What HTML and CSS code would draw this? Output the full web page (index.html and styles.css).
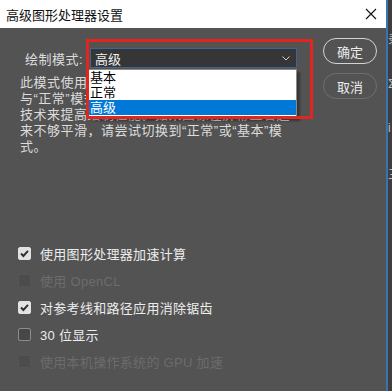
FILE: index.html
```html
<!DOCTYPE html>
<html>
<head>
	<title>高级图形处理器设置</title>
	<link rel="stylesheet" href="styles.css">
</head>
<body>
	<div class="window">
		<div class="dialog">
			<div class="titlebar">
				<span class="title">高级图形处理器设置</span>
				<svg class="close" width="12" height="12" viewBox="0 0 12 12"><path d="M1 1 L11 11 M11 1 L1 11" stroke="#111" stroke-width="1.1" fill="none"/></svg>
			</div>
			<div class="content">
				<div class="main">
					<div class="mode-row">
						<span class="mode-label">绘制模式:</span>
						<div class="mode-field">
							<div class="select">
								<span>高级</span>
								<svg class="chevron" width="8" height="5" viewBox="0 0 8 5"><path d="M0.5 0.5 L4 4 L7.5 0.5" stroke="#cfcfcf" stroke-width="1" fill="none"/></svg>
							</div>
							<ul class="options">
								<li>基本</li>
								<li>正常</li>
								<li class="active">高级</li>
							</ul>
							<div class="red-box"></div>
						</div>
					</div>
					<p class="desc">此模式使用相同数量的 GPU 显存，并<br>与“正常”模式相同，但会启用更高级的绘制<br>技术来提高绘制性能。如果图像在屏幕上看起<br>来不够平滑，请尝试切换到“正常”或“基本”模<br>式。</p>
					<ul class="checks">
						<li><span class="box checked"><svg width="13" height="13" viewBox="0 0 13 13"><path d="M3 6.5 L5.4 9 L10 3.8" stroke="#2e2e2e" stroke-width="1.9" fill="none"/></svg></span>使用图形处理器加速计算</li>
						<li class="disabled"><span class="box"></span>使用 OpenCL</li>
						<li><span class="box checked"><svg width="13" height="13" viewBox="0 0 13 13"><path d="M3 6.5 L5.4 9 L10 3.8" stroke="#2e2e2e" stroke-width="1.9" fill="none"/></svg></span>对参考线和路径应用消除锯齿</li>
						<li><span class="box"></span>30 位显示</li>
						<li class="disabled"><span class="box"></span>使用本机操作系统的 GPU 加速</li>
					</ul>
				</div>
				<div class="buttons">
					<button class="btn primary">确定</button>
					<button class="btn">取消</button>
				</div>
			</div>
		</div>
		<div class="side">
			<span>录</span>
			<span>Σ</span>
			<span>i</span>
			<span>三</span>
		</div>
	</div>
</body>
</html>
```

FILE: styles.css
```css
body {
	margin: 0;
	overflow: hidden;
	background-color: #3d3d3d;
	font-family: "Liberation Sans", "Noto Sans CJK SC", sans-serif;
	font-size: 13px;
}
.window {
	display: flex;
	height: 391px;
}
.dialog {
	width: 386px;
	flex: none;
	background-color: #535353;
	display: flex;
	flex-direction: column;
}
.titlebar {
	height: 28px;
	background-color: white;
	display: flex;
	align-items: center;
	padding: 0 9px 0 6px;
}
.title {
	color: #111;
	flex: 1;
}
.content {
	flex: 1;
	display: flex;
}
.main {
	flex: 1;
	padding-left: 18px;
}
.mode-row {
	display: flex;
	align-items: center;
	margin-top: 20px;
	height: 20px;
}
.mode-label {
	color: #dcdcdc;
	margin-left: 7px;
	width: 65px;
	letter-spacing: 0.5px;
}
.mode-field {
	position: relative;
	width: 207px;
	height: 20px;
}
.select {
	box-sizing: border-box;
	height: 20px;
	background-color: #363636;
	border: 1px solid #3f6690;
	color: #f0f0f0;
	display: flex;
	align-items: center;
	justify-content: space-between;
	padding: 0 6px 0 4px;
}
.options {
	position: absolute;
	left: -2px;
	top: 21px;
	width: 209px;
	margin: 0;
	padding: 0 0 2px 0;
	list-style: none;
	background-color: white;
	border: 1px solid #8a8a8a;
	box-sizing: border-box;
	box-shadow: 3px 3px 2px rgba(0, 0, 0, 0.35);
	z-index: 2;
}
.options li {
	height: 15px;
	line-height: 15px;
	color: #000;
	padding-left: 1px;
}
.options li.active {
	background-color: #0078d7;
	color: white;
}
.red-box {
	position: absolute;
	left: -4px;
	top: -9px;
	width: 227px;
	height: 80px;
	box-sizing: border-box;
	border: 3px solid #e0261e;
	z-index: 3;
}
.desc {
	color: #dcdcdc;
	margin: 7px 0 0 2px;
	line-height: 16px;
	letter-spacing: 0.5px;
	white-space: nowrap;
}
.checks {
	list-style: none;
	margin: 85px 0 0 0;
	padding: 0;
}
.checks li {
	height: 27px;
	display: flex;
	align-items: center;
	color: #ececec;
	letter-spacing: 0.3px;
}
.checks li.disabled {
	color: #6c6c6c;
}
.box {
	width: 13px;
	height: 13px;
	box-sizing: border-box;
	border: 1px solid #8c8c8c;
	background-color: #474747;
	border-radius: 2px;
	margin-right: 9px;
	display: flex;
}
.box.checked {
	background-color: #e2e2e2;
	border-color: #e2e2e2;
}
.disabled .box {
	border-color: #555;
	background-color: #4c4c4c;
}
.box svg {
	margin: -1px;
}
.buttons {
	display: flex;
	flex-direction: column;
	gap: 9px;
	margin: 10px 9px 0 0;
}
.btn {
	width: 54px;
	height: 26px;
	border-radius: 13px;
	background-color: transparent;
	border: 1px solid #6e6e6e;
	color: #ececec;
	font-family: "Liberation Sans", "Noto Sans CJK SC", sans-serif;
	font-size: 13px;
	padding: 0;
}
.btn.primary {
	border: 1.5px solid #d4d4d4;
}
.side {
	flex: 1;
	border-left: 2px solid #3b73ae;
	background-color: #3e3e3e;
	color: #bbb;
	display: flex;
	flex-direction: column;
	gap: 30px;
	padding-top: 30px;
	overflow: hidden;
	font-size: 12px;
}
```
